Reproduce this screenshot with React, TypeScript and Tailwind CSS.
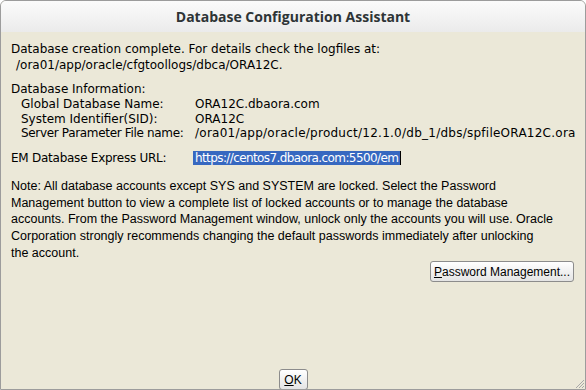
import React from "react";

const body = { fontFamily: '"DejaVu Sans", sans-serif' };
const note = { fontFamily: '"Liberation Sans", Arial, sans-serif' };

export default function App() {
  return (
    <div className="w-[586px] h-[390px] bg-white">
      <div className="w-full h-full flex flex-col border border-[#9c9c9c] rounded-t-[6px] overflow-hidden bg-[#ebe8d8]">
        <div
          className="h-[31px] shrink-0 flex items-center justify-center bg-gradient-to-b from-[#fbfbfb] to-[#ebebeb] text-[#2e3436] text-[14px] font-bold"
          style={{ fontFamily: '"Open Sans", sans-serif' }}
        >
          Database Configuration Assistant
        </div>
        <div className="flex-1 flex flex-col pl-[10px] pr-[10px] text-[12px] text-black relative" style={body}>
          <div className="mt-[9px] leading-[16px]">
            <div>Database creation complete. For details check the logfiles at:</div>
            <div className="pl-[5px]">/ora01/app/oracle/cfgtoollogs/dbca/ORA12C.</div>
          </div>
          <div className="mt-[9px] leading-[14.8px]">
            <div>Database Information:</div>
            <div className="grid grid-cols-[174px_1fr] pl-[10px]">
              <div className="whitespace-nowrap">Global Database Name:</div>
              <div>ORA12C.dbaora.com</div>
              <div className="whitespace-nowrap">System Identifier(SID):</div>
              <div>ORA12C</div>
              <div className="whitespace-nowrap tracking-[-0.33px]">Server Parameter File name:</div>
              <div className="whitespace-nowrap tracking-[0.25px]">/ora01/app/oracle/product/12.1.0/db_1/dbs/spfileORA12C.ora</div>
            </div>
          </div>
          <div className="mt-[10px] flex items-center leading-[14px]">
            <div className="w-[182px] tracking-[-0.25px]">EM Database Express URL:</div>
            <div className="bg-[#3768c0] text-white pl-[2px] pr-[2px] border-r border-black tracking-[-0.6px] whitespace-nowrap">https://centos7.dbaora.com:5500/em</div>
          </div>
          <div className="mt-[13px] leading-[16.6px] text-[12.5px] whitespace-nowrap" style={note}>
            <div>Note: All database accounts except SYS and SYSTEM are locked. Select the Password</div>
            <div>Management button to view a complete list of locked accounts or to manage the database</div>
            <div>accounts. From the Password Management window, unlock only the accounts you will use. Oracle</div>
            <div>Corporation strongly recommends changing the default passwords immediately after unlocking</div>
            <div>the account.</div>
          </div>
          <div className="mt-[0px] flex justify-end pr-[1px]">
            <button className="h-[21px] w-[144px] border border-[#8c8c8c] rounded-[3px] bg-gradient-to-b from-[#ffffff] to-[#e4e4e4] text-[12px] leading-none text-black" style={note}>
              <span className="underline">P</span>assword Management...
            </button>
          </div>
          <div className="flex-1" />
          <div className="flex justify-center mb-[-1px]">
            <button className="h-[21px] w-[29px] border border-[#8c8c8c] rounded-[3px] bg-gradient-to-b from-[#ffffff] to-[#e4e4e4] text-[12px] leading-none text-black" style={note}>
              <span className="underline">O</span>K
            </button>
          </div>
          <svg className="absolute right-0 bottom-0" width="10" height="10" viewBox="0 0 10 10">
            <path d="M9 1 L1 9 M9 4 L4 9 M9 7 L7 9" stroke="#a8a8a8" strokeWidth="1" />
          </svg>
        </div>
      </div>
    </div>
  );
}
